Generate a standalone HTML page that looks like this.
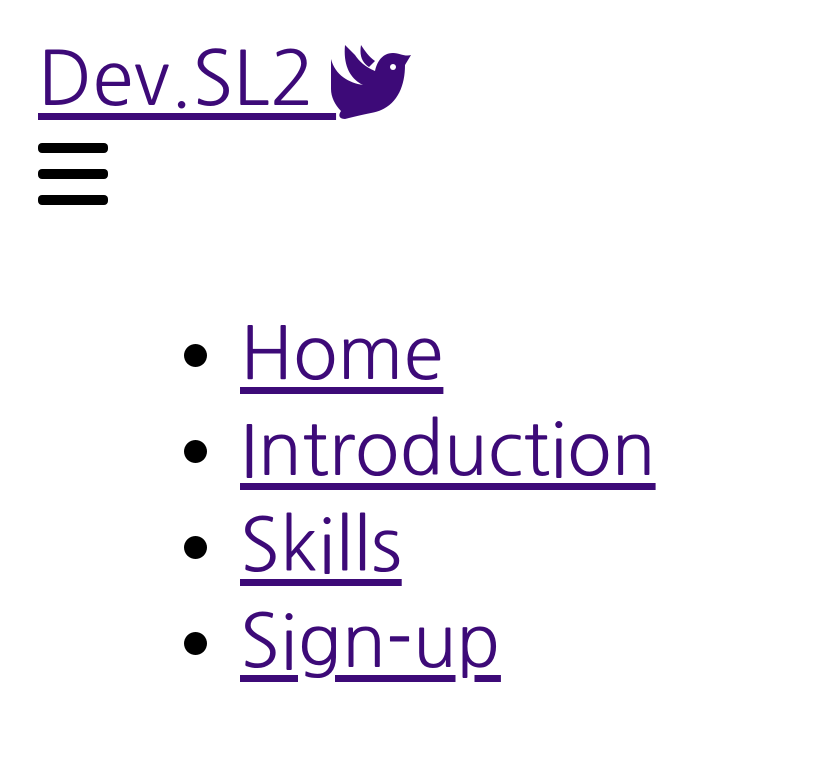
<!DOCTYPE html>
<html><head><meta charset="utf-8"><style>
html,body{margin:0;padding:0;background:#fff;width:828px;height:769px;overflow:hidden}
body{font-family:"NanumGothic","Liberation Sans",sans-serif;color:#000}
a{color:#3d0a78;text-decoration:underline;text-decoration-thickness:7px;text-underline-offset:8px}
.t{position:absolute;left:38px;top:31px;font-size:75px;line-height:96px;white-space:nowrap}
.t svg{position:absolute;left:293px;top:8px}
.h{position:absolute;left:38px;top:143px;width:70px}
.h div{height:10px;background:#000;border-radius:4px;margin-bottom:16px}
ul{position:absolute;left:0;top:306px;margin:0;padding:0 0 0 240px;font-size:73px;line-height:96px;list-style:none}
li{position:relative}
li::before{content:"";position:absolute;left:-56px;top:38px;width:23px;height:23px;border-radius:50%;background:#000}
</style></head><body>
<div class="t"><a href="#">Dev.SL2&nbsp;</a><svg width="82" height="82" viewBox="0 0 82 82"><path fill="#3d0a78" d="M14 6 L24 16 C28 22 34 28 44 32 C46 22 52 14 62 14 C68 14 74 18 80 16 L74 26 C74 50 64 70 40 74 C30 76 22 78 14 80 C10 80 6 78 10 72 C4 66 0 58 0 50 L0 20 C4 36 18 44 32 46 C20 40 12 28 14 6 Z M30 6 C34 12 38 18 44 22 L38 28 C32 24 28 18 30 6 Z"/><circle cx="62" cy="28" r="3" fill="#fff"/></svg></div>
<div class="h"><div></div><div></div><div></div></div>
<ul>
<li><a href="#">Home</a></li>
<li><a href="#">Introduction</a></li>
<li><a href="#">Skills</a></li>
<li><a href="#">Sign-up</a></li>
</ul>
</body></html>
